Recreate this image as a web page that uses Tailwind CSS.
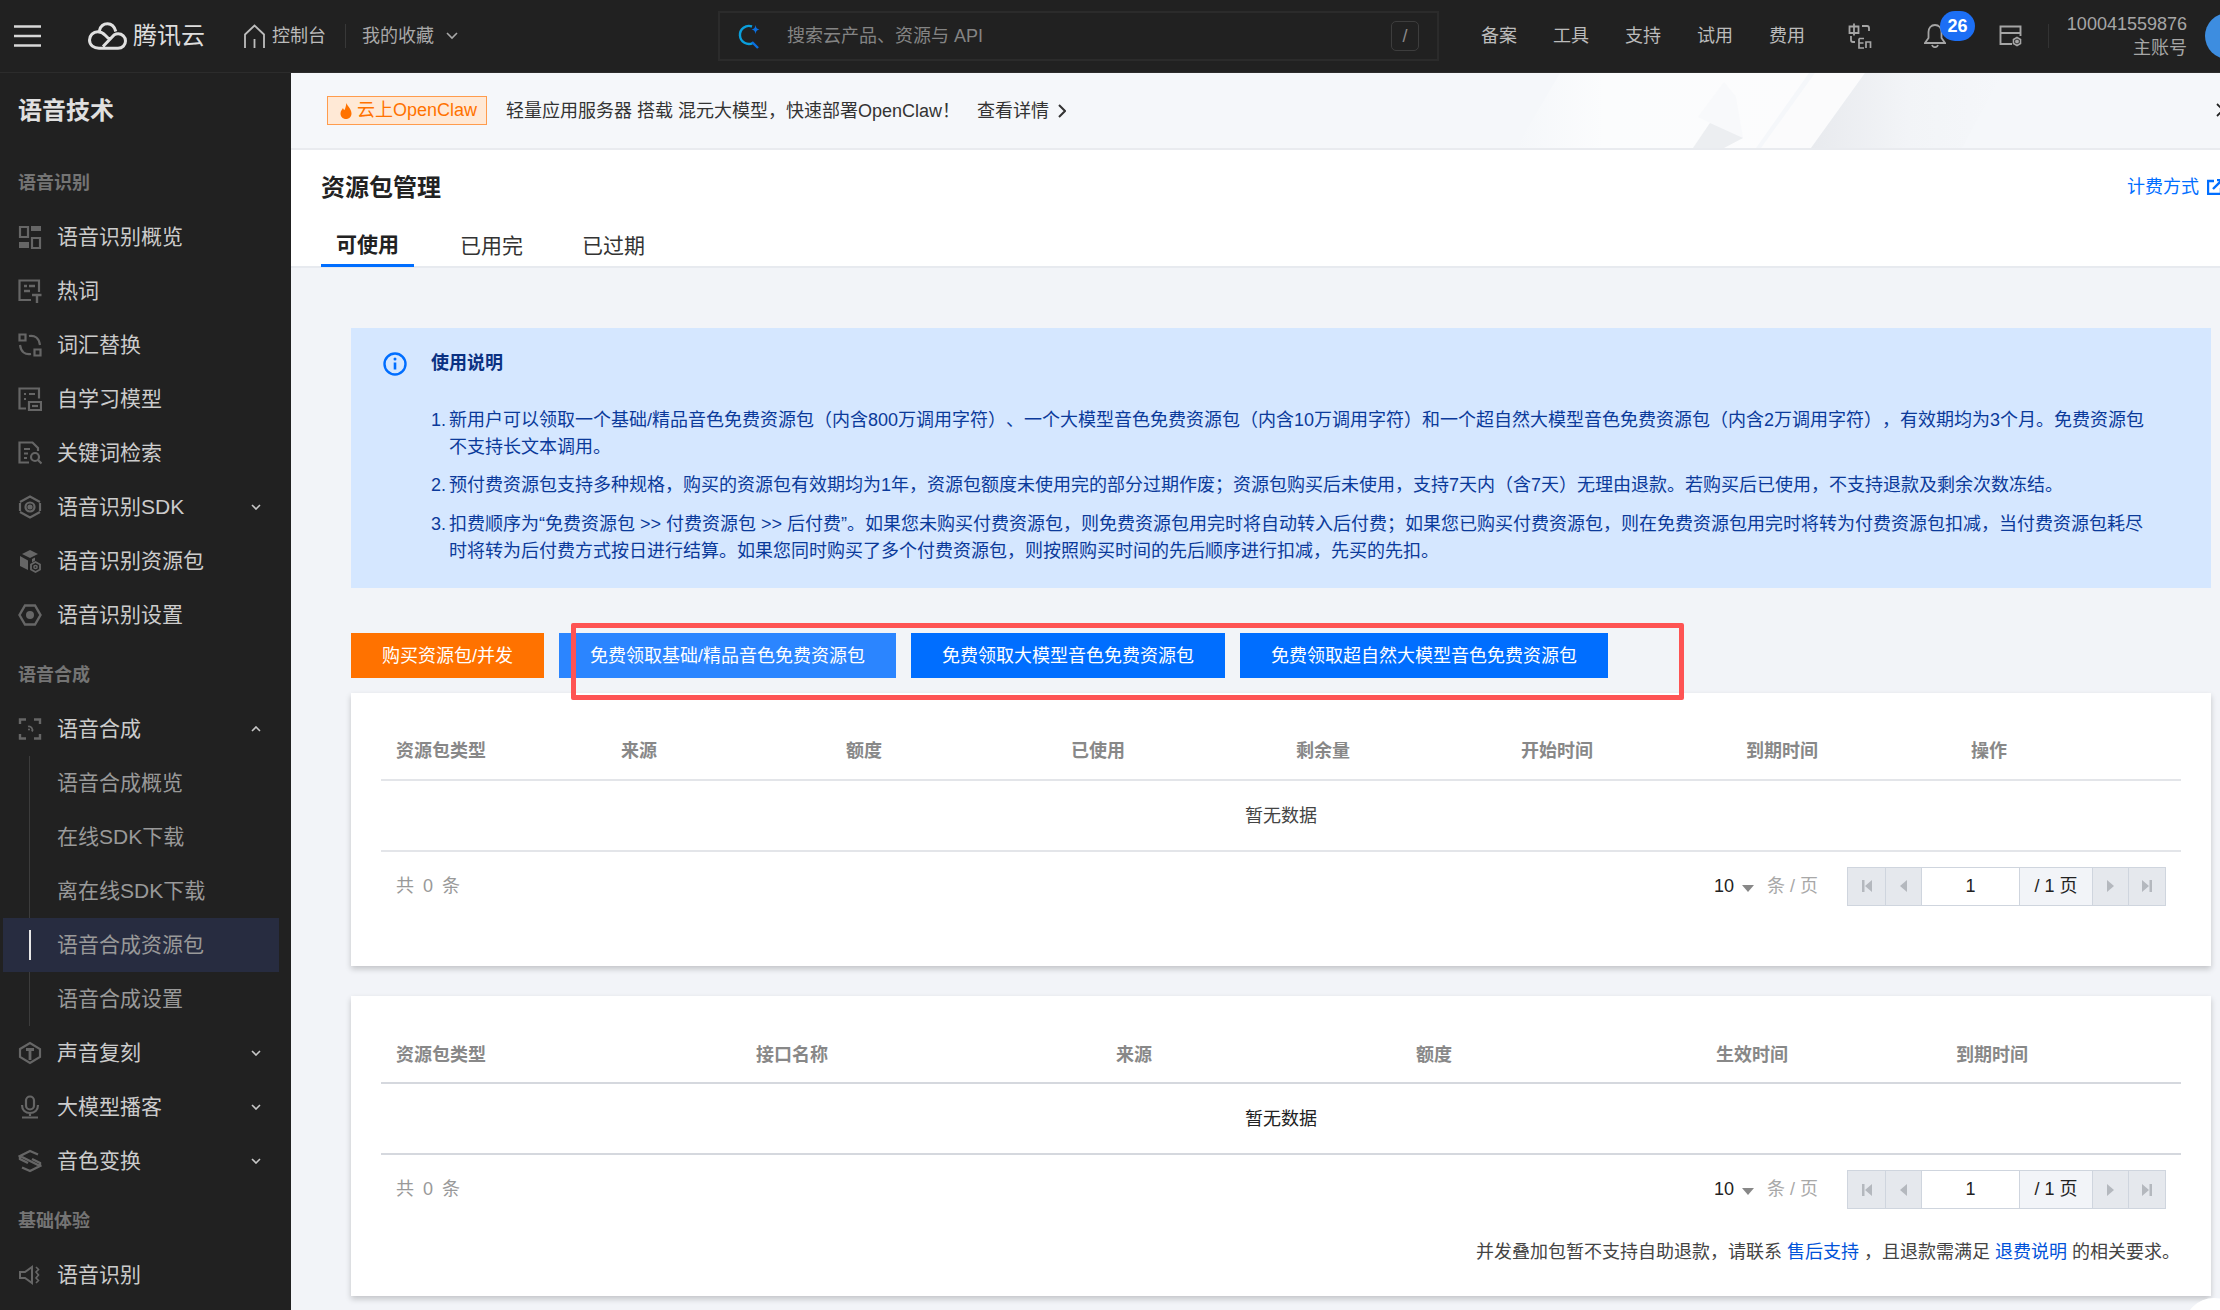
<!DOCTYPE html>
<html lang="zh-CN">
<head>
<meta charset="UTF-8">
<title>资源包管理 - 语音技术</title>
<script src="https://cdn.jsdelivr.net/npm/@tailwindcss/browser@4"></script>
</head>
<body class="bg-[#f2f4f8]">
<div class="w-[2220px] h-[1310px] overflow-hidden relative text-[18px] [text-spacing-trim:space-all] font-['Liberation_Sans','Noto_Sans_CJK_SC',sans-serif]">

  <!-- top bar -->
  <header class="h-[73px] bg-[#212121] border-b border-[#2c2c2c] flex items-center text-[#bbbbbb] whitespace-nowrap *:shrink-0">
    <svg class="ml-[14px] w-[27px] h-[22px]" viewBox="0 0 27 22" fill="none" stroke="#d8d8d8" stroke-width="2.4"><path d="M0 1.5h27M0 11h27M0 20.5h27"/></svg>
    <svg class="ml-[47px] w-[39px] h-[28px]" viewBox="0 0 39 28" fill="none" stroke="#e0e0e0" stroke-width="3"><path d="M11 26.2h19c4.4 0 7.5-3.2 7.5-7.2 0-4.2-3.3-7.2-7.4-7.2-1.5 0-2.6.3-3.8 1L15 24.5M27.800 9.500C26.500 4.600 23.500 1.800 19.500 1.800c-4 0-7 2.600-8 6.700M11 26.200c-5 0-9.500-2.800-9.500-8.200 0-4.800 3.800-8.200 8.200-8.200 3.300 0 5.500 1.400 7.800 3.700l4 4"/></svg>
    <span class="ml-[6px] text-[24px] leading-none text-[#dddddd]">腾讯云</span>
    <svg class="ml-[39px] w-[21px] h-[25px]" viewBox="0 0 21 25" fill="none" stroke="#bdbdbd" stroke-width="1.8"><path d="M1 24V10.500L10.500 1.500 20 10.500V24M10.500 15v9"/></svg>
    <span class="ml-[7px]">控制台</span>
    <span class="ml-[19px] w-px h-[24px] bg-[#383838]"></span>
    <span class="ml-[16px] text-[#a8a8a8]">我的收藏</span>
    <svg class="ml-[12px] w-[12px] h-[8px]" viewBox="0 0 12 8" fill="none" stroke="#a8a8a8" stroke-width="1.6"><path d="M1 1l5 5 5-5"/></svg>

    <div class="ml-[260px] w-[721px] h-[50px] border-2 border-[#2b2b2b] flex items-center pl-[18px] pr-[18px]">
      <svg class="w-[24px] h-[26px]" viewBox="0 0 24 26" fill="none"><path d="M14 3.500A9 9 0 1 0 15 20" stroke="#0a9fdc" stroke-width="2.400"/><path d="M14 19l6 6" stroke="#0a6fe0" stroke-width="2.400"/><path d="M17.500 2c.5 3 1.500 4 4 4.500-2.500.5-3.500 1.500-4 4.500-.5-3-1.500-4-4-4.500 2.500-.5 3.500-1.500 4-4.500z" fill="#0a6fe0"/></svg>
      <span class="ml-[25px] text-[#848484]">搜索云产品、资源与 API</span>
      <span class="ml-auto w-[28px] h-[30px] border border-[#3d3d3d] rounded-[5px] flex items-center justify-center text-[#8a8a8a]">/</span>
    </div>

    <nav class="ml-[42px] flex gap-[36px]">
      <span>备案</span><span>工具</span><span>支持</span><span>试用</span><span>费用</span>
    </nav>
    <svg class="ml-[43px] w-[24px] h-[26px]" viewBox="0 0 24 26" fill="none" stroke="#a5a5a5" stroke-width="1.800"><path d="M1.500 3.500h9v6.500h-9zM6 .5v12M14 3h5c1.500 0 2 1 2 2v3M3 13v4c0 1 .8 2 2 2h2"/><path d="M11 15.500h5M11 15.500v9.500h5M11 20h4.500M18 25v-6h4.500v6" stroke-width="1.700"/></svg>
    <div class="ml-[52px] relative w-[22px] h-[24px]">
      <svg class="w-[22px] h-[24px]" viewBox="0 0 22 24" fill="none" stroke="#a5a5a5" stroke-width="1.800"><path d="M11 1c-4 0-6.500 3-6.500 7v6L1 19h20l-3.500-5V8c0-4-2.500-7-6.500-7zM8 21c.5 1.500 1.500 2.200 3 2.200s2.500-.7 3-2.200"/></svg>
      <span class="absolute left-[16px] top-[-13px] w-[35px] h-[30px] rounded-full bg-[#1c6ff5] text-white font-bold flex items-center justify-center">26</span>
    </div>
    <svg class="ml-[53px] w-[23px] h-[22px]" viewBox="0 0 23 22" fill="none" stroke="#a5a5a5" stroke-width="1.900"><path d="M13 19H1.500V1.500h20V11M1.500 8h20"/><path d="M18 12.500l3.500 2v4l-3.500 2-3.500-2v-4z" stroke-width="1.600"/><circle cx="18" cy="16.500" r="1" fill="#a5a5a5"/></svg>
    <span class="ml-[26px] w-px h-[24px] bg-[#333333]"></span>
    <div class="ml-[17px] w-[121px] text-right text-[#a6a6a6] leading-[24px]">
      <div>100041559876</div>
      <div>主账号</div>
    </div>
    <span class="ml-[18px] w-[46px] h-[46px] rounded-full bg-[#3d8de0]"></span>
  </header>

  <div class="flex h-[1237px]">
    <!-- sidebar -->
    <aside class="w-[291px] shrink-0 bg-[#212121] text-[21px] text-[#cccccc]">
      <div class="h-[74px] pl-[18px] pt-[1px] flex items-center text-[24px] font-bold text-[#e0e0e0]">语音技术</div>
      <div class="mt-[9px] h-[54px] pl-[18px] pt-[1px] flex items-center text-[18px] font-bold text-[#747474]">语音识别</div>

      <div class="h-[54px] flex items-center pl-[18px]">
        <svg class="w-[24px] h-[24px] mr-[15px]" viewBox="0 0 24 24"><path fill="none" stroke="#666" stroke-width="2.200" d="M2 2h8v10H2zM14 13h8v10h-8z"/><path fill="#666" d="M13 1h10v5H13zM1 17h10v6H1z"/></svg>
        语音识别概览
      </div>
      <div class="h-[54px] flex items-center pl-[18px]">
        <svg class="w-[24px] h-[24px] mr-[15px]" viewBox="0 0 24 24" fill="none" stroke="#666" stroke-width="2.200"><path d="M13 21H1.500V1.500h19.500V13"/><path d="M6 7h3M11 7h6M6 12h6" stroke-width="2.400"/><path d="M14 16h9.500M19 16v8" stroke-width="2.400"/></svg>
        热词
      </div>
      <div class="h-[54px] flex items-center pl-[18px]">
        <svg class="w-[24px] h-[24px] mr-[15px]" viewBox="0 0 24 24" fill="none" stroke="#666" stroke-width="2.200"><path d="M1.500 1.500h6v6h-6zM16.500 16.500h6v6h-6z"/><path d="M11 3c6-1 10 2 11 9M13 21c-6 1-10-2-11-9"/></svg>
        词汇替换
      </div>
      <div class="h-[54px] flex items-center pl-[18px]">
        <svg class="w-[24px] h-[24px] mr-[15px]" viewBox="0 0 24 24" fill="none" stroke="#666" stroke-width="2.200"><path d="M8 21.500H1.500V1.500h19.500v10"/><path d="M6 7h2M11 7h6M6 12h2"/><path d="M11 15h12v8H11z"/><path d="M14 19h6"/></svg>
        自学习模型
      </div>
      <div class="h-[54px] flex items-center pl-[18px]">
        <svg class="w-[24px] h-[24px] mr-[15px]" viewBox="0 0 24 24" fill="none" stroke="#666" stroke-width="2.200"><path d="M11 21.500H1.500V1.500h13L20 7v3"/><path d="M6 8h6M6 12.500h4M6 17h3"/><circle cx="17" cy="16" r="4"/><path d="M20 19l3.500 3.500"/></svg>
        关键词检索
      </div>
      <div class="h-[54px] flex items-center pl-[18px]">
        <svg class="w-[24px] h-[24px] mr-[15px]" viewBox="0 0 24 24" fill="none" stroke="#666" stroke-width="2.200"><path d="M2 7l10-5.500L22 7M2 17l10 5.500L22 17M2 8v8M22 8v8"/><circle cx="12" cy="12" r="4.500"/><circle cx="12" cy="12" r="1.500" fill="#666"/></svg>
        <span>语音识别SDK</span>
        <svg class="ml-auto mr-[30px] w-[10px] h-[6px]" viewBox="0 0 10 6" fill="none" stroke="#c8c8c8" stroke-width="1.600"><path d="M1 1l4 4 4-4"/></svg>
      </div>
      <div class="h-[54px] flex items-center pl-[18px]">
        <svg class="w-[24px] h-[24px] mr-[15px]" viewBox="0 0 24 24"><path fill="#666" d="M12 1l8 4-8 4-8-4zM2 7l8 4.500V21l-8-4zM14 10l3-1.500v3l-3 2z"/><path fill="none" stroke="#666" stroke-width="1.800" d="M17.500 13l4.500 2.500v5L17.500 23 13 20.500v-5z"/><circle cx="17.500" cy="18" r="1.600" fill="none" stroke="#666" stroke-width="1.500"/></svg>
        语音识别资源包
      </div>
      <div class="h-[54px] flex items-center pl-[18px]">
        <svg class="w-[24px] h-[24px] mr-[15px]" viewBox="0 0 24 24"><path fill="none" stroke="#666" stroke-width="2.400" d="M7 2.500h10L22.500 12 17 21.500H7L1.500 12z"/><circle cx="12" cy="12" r="4" fill="#666"/></svg>
        语音识别设置
      </div>

      <div class="mt-[6px] h-[54px] pl-[18px] pt-[1px] flex items-center text-[18px] font-bold text-[#747474]">语音合成</div>
      <div class="h-[54px] flex items-center pl-[18px]">
        <svg class="w-[24px] h-[24px] mr-[15px]" viewBox="0 0 24 24" fill="none" stroke="#666" stroke-width="2.400"><path d="M2 7V2.500h6M16 2.500h6V7M2 17v4.500h6M16 21.500h6V17"/><path d="M10 9.500a3.500 3.500 0 0 1 4 5" stroke-width="1.800"/><circle cx="11" cy="12.500" r="1" fill="#666" stroke="none"/></svg>
        <span>语音合成</span>
        <svg class="ml-auto mr-[30px] w-[10px] h-[6px]" viewBox="0 0 10 6" fill="none" stroke="#c8c8c8" stroke-width="1.600"><path d="M1 5l4-4 4 4"/></svg>
      </div>

      <!-- sub menu -->
      <div class="relative text-[#999999]">
        <span class="absolute left-[29px] top-0 bottom-0 w-px bg-[#3c3c3c]"></span>
        <div class="h-[54px] flex items-center pl-[57px]">语音合成概览</div>
        <div class="h-[54px] flex items-center pl-[57px]">在线SDK下载</div>
        <div class="h-[54px] flex items-center pl-[57px]">离在线SDK下载</div>
        <div class="h-[54px] ml-[3px] mr-[12px] flex items-center pl-[54px] bg-[#272c40] relative">
          <span class="absolute left-[26px] top-[12px] w-[2px] h-[30px] bg-[#e8e8e8]"></span>
          语音合成资源包
        </div>
        <div class="h-[54px] flex items-center pl-[57px]">语音合成设置</div>
      </div>

      <div class="h-[54px] flex items-center pl-[18px]">
        <svg class="w-[24px] h-[24px] mr-[15px]" viewBox="0 0 24 24" fill="none" stroke="#666" stroke-width="2.200"><path d="M2 8l10-6 10 6v8l-10 6-10-6z"/><path d="M8 8.500h8M12 8.500V19" stroke-width="2.800"/></svg>
        <span>声音复刻</span>
        <svg class="ml-auto mr-[30px] w-[10px] h-[6px]" viewBox="0 0 10 6" fill="none" stroke="#c8c8c8" stroke-width="1.600"><path d="M1 1l4 4 4-4"/></svg>
      </div>
      <div class="h-[54px] flex items-center pl-[18px]">
        <svg class="w-[24px] h-[24px] mr-[15px]" viewBox="0 0 24 24" fill="none" stroke="#666" stroke-width="2.200"><rect x="8" y="1.500" width="8" height="13" rx="4"/><path d="M4 10c0 5 3.500 8 8 8s8-3 8-8M12 18v3M4 22.500h16"/></svg>
        <span>大模型播客</span>
        <svg class="ml-auto mr-[30px] w-[10px] h-[6px]" viewBox="0 0 10 6" fill="none" stroke="#c8c8c8" stroke-width="1.600"><path d="M1 1l4 4 4-4"/></svg>
      </div>
      <div class="h-[54px] flex items-center pl-[18px]">
        <svg class="w-[24px] h-[24px] mr-[15px]" viewBox="0 0 24 24" fill="none" stroke="#666" stroke-width="2.400"><path d="M20 5.500L12 2 2 7l20 10-10 5-8-3.500"/><path d="M2 7v3l8 4M22 17v-3l-8-4"/></svg>
        <span>音色变换</span>
        <svg class="ml-auto mr-[30px] w-[10px] h-[6px]" viewBox="0 0 10 6" fill="none" stroke="#c8c8c8" stroke-width="1.600"><path d="M1 1l4 4 4-4"/></svg>
      </div>

      <div class="mt-[6px] h-[54px] pl-[18px] pt-[1px] flex items-center text-[18px] font-bold text-[#747474]">基础体验</div>
      <div class="h-[54px] flex items-center pl-[18px]">
        <svg class="w-[24px] h-[24px] mr-[15px]" viewBox="0 0 24 24" fill="none" stroke="#666" stroke-width="2"><path d="M2 9v6h5l7 5V4L7 9z"/><path d="M18 4l2.500 2.500L18 9l2.500 3L18 15l2.500 2.500L18 20" stroke-width="1.600"/></svg>
        语音识别
      </div>
    </aside>

    <!-- main column -->
    <main class="w-[1929px] shrink-0">
      <!-- promo banner -->
      <div class="h-[77px] bg-[#f5f7fa] border-b-2 border-[#e9ebef] relative flex items-center pl-[36px]">
        <svg class="absolute left-0 top-0 w-[1929px] h-[75px]" viewBox="291 73 1929 75">
          <defs>
            <linearGradient id="bandA" x1="0" x2="1" y1="0" y2="0"><stop offset="0" stop-color="#f5f7fa"/><stop offset=".3" stop-color="#fbfcfd"/><stop offset="1" stop-color="#fcfcfd"/></linearGradient>
            <linearGradient id="bandB" x1="0" x2="1" y1="0" y2="0"><stop offset="0" stop-color="#e8eaee"/><stop offset=".5" stop-color="#f2f4f7"/><stop offset="1" stop-color="#f5f7fa"/></linearGradient>
          </defs>
          <path fill="url(#bandA)" d="M1560 73h249l-53 75h-240z"/>
          <path fill="#f8f9fb" d="M1724 82l12 15 7 41-50 10 17-25-12-6z"/>
          <path fill="#eceef1" d="M1710 123l33 15-19 10h-31z"/>
          <path fill="#fbfbfc" d="M1815 73h50l-54 75h-50z"/>
          <path fill="url(#bandB)" d="M1865 73h138l-41 75h-151z"/>
        </svg>
        <span class="relative h-[29px] w-[160px] border border-[#ff9c4d] bg-[#ffe9d6] text-[#ff7200] flex items-center pl-[12px]">
          <svg class="w-[12px] h-[16px] mr-[5px]" viewBox="0 0 12 16"><path fill="#ff7200" d="M6.500 0c.5 3 5 5.500 5 10.500C11.500 13.800 9 16 6 16s-5.500-2.200-5.500-5.500C.5 8 2 6.500 3 5c.3 1 .8 1.800 1.500 2C5.500 5 6 2.500 6.500 0z"/></svg>
          云上OpenClaw
        </span>
        <span class="relative ml-[19px] pt-[1px] text-[#333333]">轻量应用服务器 搭载 混元大模型，快速部署OpenClaw！</span>
        <span class="relative ml-[17px] pt-[1px] text-[#333333]">查看详情</span>
        <svg class="relative ml-[9px] w-[8px] h-[14px]" viewBox="0 0 8 14" fill="none" stroke="#333" stroke-width="2"><path d="M1 1l6 6-6 6"/></svg>
        <svg class="absolute left-[1925px] top-[30px] w-[14px] h-[14px]" viewBox="0 0 14 14" fill="none" stroke="#222" stroke-width="1.800"><path d="M1 1l12 12M13 1L1 13"/></svg>
      </div>

      <!-- page title + tabs -->
      <div class="h-[118px] bg-white border-b-2 border-[#e7eaef] pl-[30px] pr-[9px]">
        <div class="h-[74px] flex items-center justify-between">
          <h1 class="text-[24px] font-bold text-[#222222] pt-[1px]">资源包管理</h1>
          <div class="flex items-center text-[#006eff] w-[84px] shrink-0">
            <span class="shrink-0">计费方式</span>
            <svg class="ml-[8px] w-[16px] h-[16px] shrink-0" viewBox="0 0 16 16" fill="none" stroke="#006eff" stroke-width="2.400"><path d="M14 9v6H1V2h6M6 10L15 1M10 1h5v5"/></svg>
          </div>
        </div>
        <div class="flex text-[21px] text-[#333333]">
          <div class="h-[43px] w-[93px] border-b-[3px] border-[#006eff] font-bold pt-[1px] flex items-center justify-center text-[#222222]">可使用</div>
          <div class="h-[43px] ml-[46px] flex items-center">已用完</div>
          <div class="h-[43px] ml-[59px] flex items-center">已过期</div>
        </div>
      </div>

      <!-- page body -->
      <div class="pl-[60px] pr-[9px] pt-[60px]">
        <div class="h-[260px] bg-[#d5e7ff] text-[#0b3a9a] pl-[32px] pt-[23px] flex items-start">
          <svg class="w-[24px] h-[24px] mt-[1px]" viewBox="0 0 24 24" fill="none" stroke="#006eff" stroke-width="2.400"><circle cx="12" cy="12" r="10.500"/><path d="M12 10.500v7" stroke-width="2.600"/><circle cx="12" cy="7" r="1.500" fill="#006eff" stroke="none"/></svg>
          <div class="ml-[24px]">
            <div class="font-bold leading-[24px] text-[#0a3182]">使用说明</div>
            <ol class="mt-[32px] leading-[27px] whitespace-nowrap">
              <li class="flex"><span class="w-[18px] shrink-0">1.</span><span>新用户可以领取一个基础/精品音色免费资源包（内含800万调用字符）、一个大模型音色免费资源包（内含10万调用字符）和一个超自然大模型音色免费资源包（内含2万调用字符），有效期均为3个月。免费资源包<br>不支持长文本调用。</span></li>
              <li class="flex mt-[11px]"><span class="w-[18px] shrink-0">2.</span><span>预付费资源包支持多种规格，购买的资源包有效期均为1年，资源包额度未使用完的部分过期作废；资源包购买后未使用，支持7天内（含7天）无理由退款。若购买后已使用，不支持退款及剩余次数冻结。</span></li>
              <li class="flex mt-[12px]"><span class="w-[18px] shrink-0">3.</span><span>扣费顺序为“免费资源包 &gt;&gt; 付费资源包 &gt;&gt; 后付费”。如果您未购买付费资源包，则免费资源包用完时将自动转入后付费；如果您已购买付费资源包，则在免费资源包用完时将转为付费资源包扣减，当付费资源包耗尽<br>时将转为后付费方式按日进行结算。如果您同时购买了多个付费资源包，则按照购买时间的先后顺序进行扣减，先买的先扣。</span></li>
            </ol>
          </div>
        </div>

        <!-- action buttons -->
        <div class="relative mt-[45px] flex text-white">
          <div class="h-[45px] w-[193px] pt-[1px] bg-[#ff7200] flex items-center justify-center">购买资源包/并发</div>
          <div class="h-[45px] w-[337px] ml-[15px] pt-[1px] bg-[#2b85ff] flex items-center justify-center">免费领取基础/精品音色免费资源包</div>
          <div class="h-[45px] w-[314px] ml-[15px] pt-[1px] bg-[#006eff] flex items-center justify-center">免费领取大模型音色免费资源包</div>
          <div class="h-[45px] w-[368px] ml-[15px] pt-[1px] bg-[#006eff] flex items-center justify-center">免费领取超自然大模型音色免费资源包</div>
          <div class="absolute left-[220px] top-[-10px] w-[1113px] h-[77px] border-[5px] border-[#fe5353] rounded-[2px]"></div>
        </div>

        <!-- table: packs -->
        <section class="mt-[15px] h-[273px] bg-white shadow-[0_3px_6px_rgba(0,0,0,0.2)] px-[30px]">
          <div class="grid grid-cols-[repeat(8,225px)] h-[88px] items-center pt-[30px] border-b-2 border-[#e3e5e9] font-bold text-[#888888]">
            <span class="pl-[15px]">资源包类型</span><span class="pl-[15px]">来源</span><span class="pl-[15px]">额度</span><span class="pl-[15px]">已使用</span><span class="pl-[15px]">剩余量</span><span class="pl-[15px]">开始时间</span><span class="pl-[15px]">到期时间</span><span class="pl-[15px]">操作</span>
          </div>
          <div class="h-[71px] pt-[2px] border-b-2 border-[#e3e5e9] flex items-center justify-center text-[#444444]">暂无数据</div>
          <div class="h-[54px] pt-[14px] flex items-center">
            <span class="ml-[15px] pt-[1px] text-[#999999] tracking-[1px] [word-spacing:2px]">共 0 条</span>
            <span class="ml-auto text-[#222222] pl-[2px]">10</span>
            <svg class="ml-[8px] mt-[4px] w-[12px] h-[7px]" viewBox="0 0 12 7"><path fill="#888" d="M0 0h12L6 7z"/></svg>
            <span class="ml-[13px] text-[#a8a8a8]">条 / 页</span>
            <div class="ml-[29px] mr-[15px] h-[39px] flex border border-[#cfd5de] text-[#222222]">
              <span class="w-[37px] bg-[#e5e8ed] flex items-center justify-center"><svg class="w-[10px] h-[12px]" viewBox="0 0 10 12"><path fill="#b4b8be" d="M0 0h2.500v12H0zM10 0v12L3 6z"/></svg></span>
              <span class="w-[36px] bg-[#e5e8ed] border-l border-[#cfd5de] flex items-center justify-center"><svg class="w-[7px] h-[12px]" viewBox="0 0 7 12"><path fill="#b4b8be" d="M7 0v12L0 6z"/></svg></span>
              <span class="w-[98px] bg-white border-l border-[#cfd5de] flex items-center justify-center">1</span>
              <span class="w-[73px] bg-[#f2f4f8] border-l border-[#cfd5de] flex items-center justify-center">/ 1 页</span>
              <span class="w-[36px] bg-[#e5e8ed] border-l border-[#cfd5de] flex items-center justify-center"><svg class="w-[7px] h-[12px]" viewBox="0 0 7 12"><path fill="#b4b8be" d="M0 0v12l7-6z"/></svg></span>
              <span class="w-[37px] bg-[#e5e8ed] border-l border-[#cfd5de] flex items-center justify-center"><svg class="w-[10px] h-[12px]" viewBox="0 0 10 12"><path fill="#b4b8be" d="M10 0H7.500v12H10zM0 0v12l7-6z"/></svg></span>
            </div>
          </div>
        </section>

        <!-- table: concurrency -->
        <section class="mt-[30px] h-[300px] bg-white shadow-[0_3px_6px_rgba(0,0,0,0.2)] px-[30px]">
          <div class="grid grid-cols-[360px_360px_300px_300px_240px_240px] h-[88px] items-center pt-[32px] border-b-2 border-[#d5d8de] font-bold text-[#888888]">
            <span class="pl-[15px]">资源包类型</span><span class="pl-[15px]">接口名称</span><span class="pl-[15px]">来源</span><span class="pl-[15px]">额度</span><span class="pl-[15px]">生效时间</span><span class="pl-[15px]">到期时间</span>
          </div>
          <div class="h-[71px] pt-[2px] border-b-2 border-[#d5d8de] flex items-center justify-center text-[#222222]">暂无数据</div>
          <div class="h-[55px] pt-[14px] flex items-center">
            <span class="ml-[15px] text-[#999999] tracking-[1px] [word-spacing:2px]">共 0 条</span>
            <span class="ml-auto text-[#222222] pl-[2px]">10</span>
            <svg class="ml-[8px] mt-[4px] w-[12px] h-[7px]" viewBox="0 0 12 7"><path fill="#888" d="M0 0h12L6 7z"/></svg>
            <span class="ml-[13px] text-[#a8a8a8]">条 / 页</span>
            <div class="ml-[29px] mr-[15px] h-[39px] flex border border-[#cfd5de] text-[#222222]">
              <span class="w-[37px] bg-[#e5e8ed] flex items-center justify-center"><svg class="w-[10px] h-[12px]" viewBox="0 0 10 12"><path fill="#b4b8be" d="M0 0h2.500v12H0zM10 0v12L3 6z"/></svg></span>
              <span class="w-[36px] bg-[#e5e8ed] border-l border-[#cfd5de] flex items-center justify-center"><svg class="w-[7px] h-[12px]" viewBox="0 0 7 12"><path fill="#b4b8be" d="M7 0v12L0 6z"/></svg></span>
              <span class="w-[98px] bg-white border-l border-[#cfd5de] flex items-center justify-center">1</span>
              <span class="w-[73px] bg-[#f2f4f8] border-l border-[#cfd5de] flex items-center justify-center">/ 1 页</span>
              <span class="w-[36px] bg-[#e5e8ed] border-l border-[#cfd5de] flex items-center justify-center"><svg class="w-[7px] h-[12px]" viewBox="0 0 7 12"><path fill="#b4b8be" d="M0 0v12l7-6z"/></svg></span>
              <span class="w-[37px] bg-[#e5e8ed] border-l border-[#cfd5de] flex items-center justify-center"><svg class="w-[10px] h-[12px]" viewBox="0 0 10 12"><path fill="#b4b8be" d="M10 0H7.500v12H10zM0 0v12l7-6z"/></svg></span>
            </div>
          </div>
          <p class="mt-[29px] pr-[1px] text-right text-[#444444]">并发叠加包暂不支持自助退款，请联系 <span class="text-[#0052d9]">售后支持</span> ，且退款需满足 <span class="text-[#0052d9]">退费说明</span> 的相关要求。</p>
        </section>
      </div>
    </main>
  </div>

  <!-- floating button peeking from the corner -->
  <span class="absolute left-[2184px] top-[1298px] w-[60px] h-[60px] rounded-full bg-white"></span>
</div>
</body>
</html>
